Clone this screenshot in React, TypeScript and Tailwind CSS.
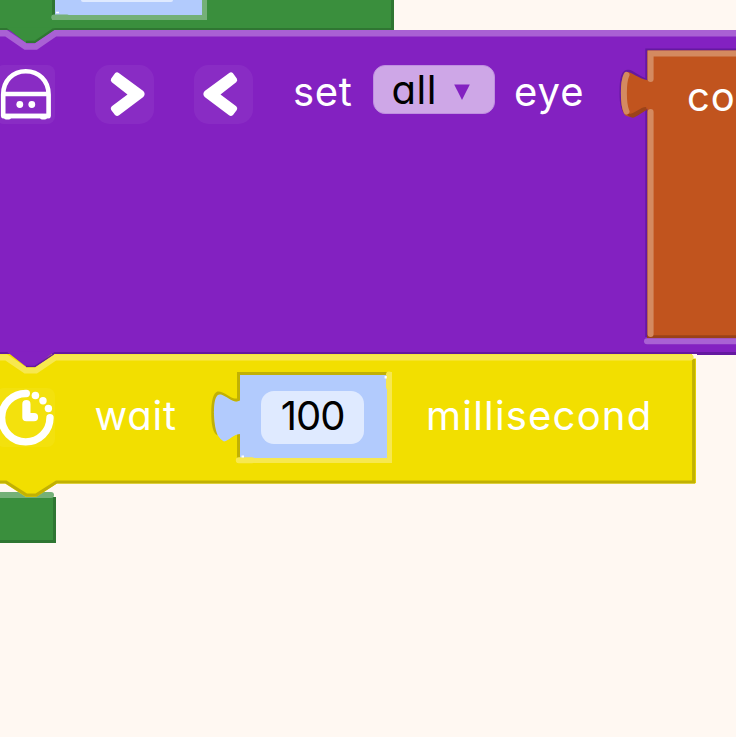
import React from "react";

const label = "block whitespace-nowrap font-['Inter','Liberation_Sans',sans-serif] text-[40px] leading-[48px] [font-feature-settings:'cv11']";

function Overlay({ w, h, className, children }: { w: number; h: number; className: string; children: React.ReactNode }) {
  return (
    <svg width={w} height={h} viewBox={`0 0 ${w} ${h}`} fill="none" className={`absolute overflow-visible ${className}`}>
      {children}
    </svg>
  );
}

function TopBlock() {
  return (
    <section className="relative h-[30px] w-[394px] border-r-[3px] border-b-2 border-[#2f7632] bg-[#3a8f3d] pl-[52px]">
      <div className="relative h-[20px] w-[155px] border-b-[5px] border-r-[5px] border-[#74b077] bg-[#b2cbfd]">
        <div className="ml-[29px] h-[2px] w-[92px] rounded-b-full bg-[#dfeaff]" />
        <Overlay w={155} h={20} className="left-0 top-0">
          <path d="M1.5 0V15" stroke="#2f7632" strokeWidth="3" />
          <path d="M2 17.3H15" stroke="#74b077" strokeWidth="5.4" strokeLinecap="round" />
          <path d="M4 12.5H7" stroke="#fff" strokeWidth="1.5" />
        </Overlay>
      </div>
    </section>
  );
}

function Robot() {
  return (
    <svg width="59" height="59" viewBox="0 0 59 59" fill="none" stroke="#fff" className="shrink-0">
      <path d="M7.2 51V29.5C7.2 15.5 17 6.2 29.8 6.2S52.6 15.5 52.6 29.5V51Z" strokeWidth="4.6" strokeLinejoin="round" />
      <path d="M6 29H54M6 51H54" strokeWidth="4.6" />
      <path d="M10 52.5H13M46 52.5H49" strokeWidth="4" strokeLinecap="round" />
      <circle cx="23.8" cy="39.5" r="3.4" fill="#fff" stroke="none" />
      <circle cx="35.8" cy="39.5" r="3.4" fill="#fff" stroke="none" />
    </svg>
  );
}

function Arrow({ flip = false }: { flip?: boolean }) {
  return (
    <svg width="59" height="59" viewBox="0 0 59 59" className={flip ? "-scale-x-100" : ""}>
      <path d="M20.2 7.9Q22 6.5 23.8 7.9L48.3 26Q51 29 48.3 32L24 50.2Q22 51.7 20 50L16.2 45Q15 43 16.8 41.3L32.5 29.5 16.8 17.2Q15 15.5 16.2 13.5Z" fill="#fff" />
    </svg>
  );
}

function ColourBlock() {
  return (
    <div className="relative ml-[64px] mt-[19.5px] h-[288px] w-[90px] shrink-0 bg-[#c1541e] pl-[40px] pt-[23px]">
      <span className={`${label} tracking-[1px] text-white`}>co</span>
      <Overlay w={90} h={294} className="left-0 top-0">
        <path d="M-.5 30C-6 29-13 23-17 21.5C-25 19-26 30-26 43C-26 53-24 61-21 63" stroke="#6519a0" strokeWidth="3" />
        <path d="M90 -.6H-.7V287" stroke="#6519a0" strokeWidth="2" />
        <path d="M5 30C-3 32-12 24-19 22C-25 21-26 35-26 43C-26 52-25 65-20 66C-14 69-4 58 5 58Z" fill="#c1541e" />
        <path d="M-20 64C-13 65-7 57-1 57L0 60C-6 63-9 66-13 67.5Q-17 68.5-21 63Z" fill="#9c4319" />
        <path d="M0 286.8H90" stroke="#9a4218" strokeWidth="3.3" />
        <path d="M90 3.4H3.6V29M3.6 62V284M-20.5 25C-24 32-24 54-20.5 61.5" stroke="#d48a60" strokeWidth="6" strokeLinecap="round" />
        <path d="M0 291.2H90" stroke="#a961d4" strokeWidth="6" strokeLinecap="round" />
      </Overlay>
    </div>
  );
}

function EyeBlock() {
  return (
    <section className="relative h-[325px] w-full border-b-[3px] border-[#6519a0] bg-[#8321c1]">
      <Overlay w={736} h={36} className="left-0 top-0">
        <path d="M0-2.3H6.5L26 13H35L55-2.3Z" fill="#3a8f3d" />
        <path d="M26 12H35L54-.8" stroke="#2f7632" strokeWidth="2.6" />
        <path d="M-3 3.2H6L25.5 16.5H36L55.5 3.2H736" stroke="#a961d4" strokeWidth="6.4" />
      </Overlay>
      <div className="flex h-[322px] items-start overflow-visible">
        <div className="-ml-[4px] mt-[35px] h-[59px] w-[59px] shrink-0 rounded-lg bg-white/5"><Robot /></div>
        <div className="ml-[40px] mt-[35px] h-[59px] w-[59px] shrink-0 rounded-[15px] bg-white/5"><Arrow /></div>
        <div className="ml-[40px] mt-[35px] h-[59px] w-[59px] shrink-0 rounded-[15px] bg-white/5"><Arrow flip /></div>
        <span className={`${label} ml-[40px] mt-[38px] w-[60px] shrink-0 tracking-[0.7px] text-white`}>set</span>
        <div className="ml-[19.5px] mt-[34.5px] flex h-[49.5px] w-[122px] shrink-0 items-start rounded-[12px] border border-[#bf8fe0] bg-[#cea7e7] pl-[18px]">
          <span className={`${label} w-[50px] tracking-[0.5px] text-black`}>all</span>
          <svg width="16" height="16" viewBox="0 0 16 16" className="ml-[12px] mt-[18.5px]"><path d="M.2.4H15.8L8 16Z" fill="#8321c1" /></svg>
        </div>
        <span className={`${label} ml-[19.5px] mt-[38px] w-[69px] shrink-0 tracking-[1px] text-white`}>eye</span>
        <ColourBlock />
      </div>
    </section>
  );
}

function Clock() {
  return (
    <svg width="59" height="59" viewBox="0 0 59 59" fill="none" stroke="#fff" strokeLinecap="round">
      <path d="M30.3 5.5A24.2 24.2 0 1 0 54 29.8" strokeWidth="7.4" />
      <path d="M30.4 16.2V29.2H38" strokeWidth="8.2" strokeLinejoin="round" />
      <g fill="#fff" stroke="none">
        <circle cx="39.4" cy="7.5" r="3.8" /><circle cx="47" cy="12.7" r="3.7" /><circle cx="52.4" cy="20.5" r="3.7" />
      </g>
    </svg>
  );
}

function NumberInput() {
  return (
    <div className="relative ml-[62px] mt-[18px] h-[91px] w-[155px] shrink-0 border-b-[5px] border-r-[5px] border-[#f7e84f] bg-[#b2cbfd] pl-[24px] pt-[19.5px]">
      <Overlay w={155} h={91} className="left-0 top-0">
        <path d="M150 1.5H1.5V27.5C-5 31-12 20.5-19 21C-26 24-26 58-19 62M1.5 61V86" stroke="#c1b104" strokeWidth="3" />
        <path d="M4 29C-4 32-10 24-16 22.5C-23 21-23 35-23 43C-22 63-18 66-13 69.5C-8 69-4 62 4 62Z" fill="#b2cbfd" />
        <path d="M1.8 88.3H15M152 2.5V15" stroke="#f7e84f" strokeWidth="6" strokeLinecap="round" />
        <path d="M4.5 84.5H7M148.7 4V6.5" stroke="#fff" strokeWidth="2.2" />
      </Overlay>
      <div className="flex h-[53px] w-[103px] justify-center rounded-[13px] bg-[#dfeaff]">
        <span className={`${label} pt-px tracking-[-1px] text-black`}>100</span>
      </div>
    </div>
  );
}

function WaitBlock() {
  return (
    <section className="relative -mt-[1.5px] h-[129.5px] w-[695.5px] bg-[#f2df00]">
      <Overlay w={696} h={144} className="left-0 top-0">
        <path d="M0 125H695V129.5H57L36 143H26L5 129.5H0Z" fill="#f2df00" />
        <path d="M0 128H6L26.5 141.2H36L56.5 128H693.7V5" stroke="#c1b104" strokeWidth="3.2" />
        <path d="M692 0H697V4.5H692Z" fill="#fff8f2" />
        <path d="M0-2.5H6.5L26.5 13H35L55-2.5Z" fill="#8321c1" />
        <path d="M26 12.5H35L54 0" stroke="#6519a0" strokeWidth="1.5" />
        <path d="M-3 3.3H6L25.5 16.5H36L55.5 3.3H690.5" stroke="#f7e84f" strokeWidth="6.2" strokeLinecap="round" />
      </Overlay>
      <div className="flex items-start">
        <div className="-ml-[4px] mt-[34.5px] h-[59px] w-[59px] shrink-0 rounded-lg bg-white/5"><Clock /></div>
        <span className={`${label} ml-[39.5px] mt-[38.5px] w-[80.5px] shrink-0 tracking-[0.8px] text-white`}>wait</span>
        <NumberInput />
        <span className={`${label} ml-[34px] mt-[38.5px] w-[226px] shrink-0 tracking-[1.2px] text-white`}>millisecond</span>
      </div>
    </section>
  );
}

export default function App() {
  return (
    <main className="h-[737px] w-[736px] overflow-hidden bg-[#fff8f2]">
      <TopBlock />
      <EyeBlock />
      <div className="relative z-10"><WaitBlock /></div>
      <section className="relative mt-[9px] h-[51px] w-[56px] pt-[5px]">
        <div className="h-[46px] w-[56px] border-b-[3px] border-r-[3px] border-[#2f7632] bg-[#3a8f3d]" />
        <Overlay w={56} h={51} className="left-0 top-0">
          <path d="M-3 3H51" stroke="#74b077" strokeWidth="6" strokeLinecap="round" />
        </Overlay>
      </section>
    </main>
  );
}
